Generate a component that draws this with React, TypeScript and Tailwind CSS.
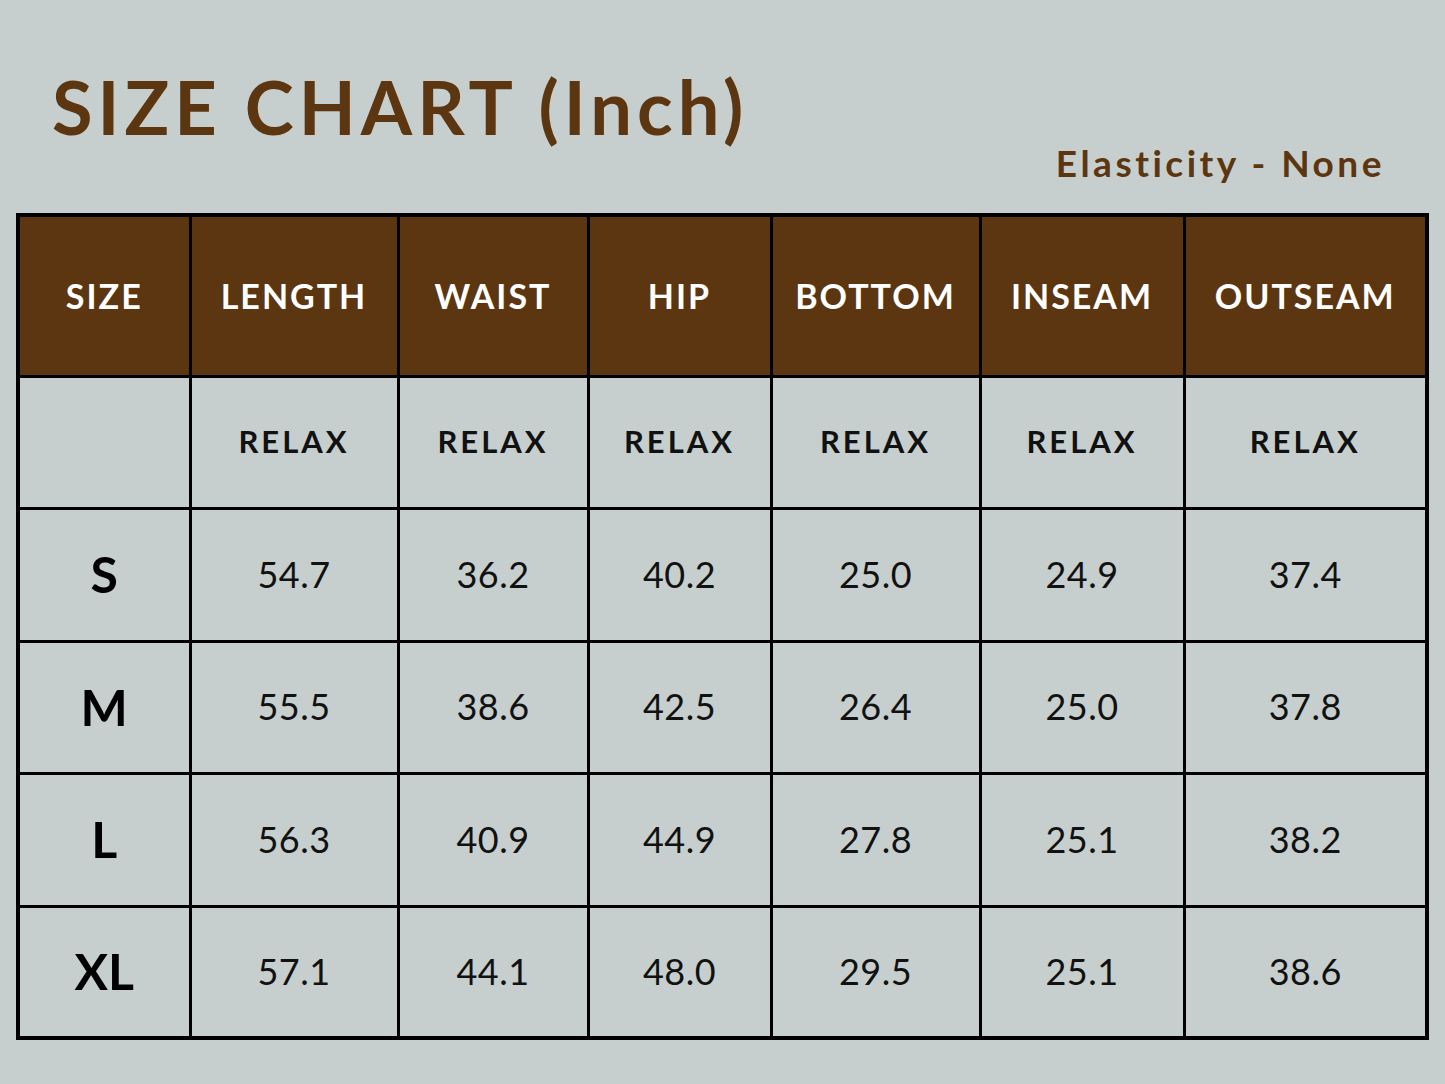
import React from "react";

const headers = ["SIZE", "LENGTH", "WAIST", "HIP", "BOTTOM", "INSEAM", "OUTSEAM"];
const colWidths = ["w-[172px]", "w-[208px]", "w-[190px]", "w-[183px]", "w-[209px]", "w-[204px]", "w-[243px]"];

const rows: { size: string; values: string[]; h: string }[] = [
  { size: "S", values: ["54.7", "36.2", "40.2", "25.0", "24.9", "37.4"], h: "h-[133px]" },
  { size: "M", values: ["55.5", "38.6", "42.5", "26.4", "25.0", "37.8"], h: "h-[132px]" },
  { size: "L", values: ["56.3", "40.9", "44.9", "27.8", "25.1", "38.2"], h: "h-[133px]" },
  { size: "XL", values: ["57.1", "44.1", "48.0", "29.5", "25.1", "38.6"], h: "h-[132px]" },
];

const App: React.FC = () => {
  return (
    <div
      className="w-[1445px] h-[1084px] bg-[#c6cfce] overflow-hidden"
      style={{ fontFamily: "Lato, 'Open Sans', sans-serif" }}
    >
      {/* Title block */}
      <div className="relative h-[213px]">
        <h1 className="absolute left-[52px] top-[62px] text-[74px] leading-[90px] font-bold tracking-[5px] text-[#5c3610]">
          SIZE CHART (Inch)
        </h1>
        <p className="absolute right-[60px] top-[141px] text-[37px] leading-[44px] font-bold tracking-[3.5px] text-[#5c3610]">
          Elasticity - None
        </p>
      </div>

      {/* Table */}
      <div className="pl-[16px]">
        <table className="border-collapse border-[4px] border-black table-fixed">
          <thead>
            <tr className="h-[161px] bg-[#5c3610]">
              {headers.map((h, i) => (
                <th
                  key={h}
                  className={`${colWidths[i]} border-[3px] border-black text-white text-[34px] font-bold tracking-[2px] text-center`}
                >
                  {h}
                </th>
              ))}
            </tr>
          </thead>
          <tbody>
            <tr className="h-[132px]">
              <td className="border-[3px] border-black" />
              {headers.slice(1).map((h) => (
                <td
                  key={h}
                  className="border-[3px] border-black text-center text-[31px] font-bold tracking-[3px] text-[#111] pb-[2px]"
                >
                  RELAX
                </td>
              ))}
            </tr>
            {rows.map((r) => (
              <tr key={r.size} className={r.h}>
                <td className="border-[3px] border-black text-center text-[50px] font-bold text-black">
                  {r.size}
                </td>
                {r.values.map((v, i) => (
                  <td
                    key={i}
                    className="border-[3px] border-black text-center text-[36px] tracking-[0.5px] text-[#111] pb-[2px]"
                  >
                    {v}
                  </td>
                ))}
              </tr>
            ))}
          </tbody>
        </table>
      </div>
    </div>
  );
};

export default App;
